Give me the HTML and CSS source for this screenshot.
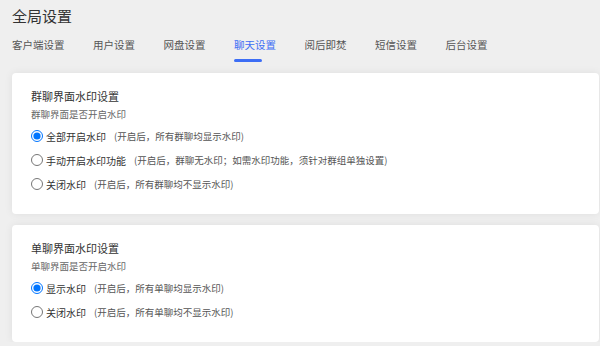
FILE: index.html
```html
<!DOCTYPE html>
<html lang="zh-CN">
<head>
    <meta charset="UTF-8">
    <meta name="viewport" content="width=device-width, initial-scale=1.0">
    <title>全局设置</title>
    <link rel="stylesheet" href="styles.css">
</head>
<body>
    <div class="page">
        <h1>全局设置</h1>

        <div class="tabs">
            <div class="tab">客户端设置</div>
            <div class="tab">用户设置</div>
            <div class="tab">网盘设置</div>
            <div class="tab active">聊天设置</div>
            <div class="tab">阅后即焚</div>
            <div class="tab">短信设置</div>
            <div class="tab">后台设置</div>
        </div>

        <div class="card">
            <h2>群聊界面水印设置</h2>
            <p class="desc">群聊界面是否开启水印</p>
            <label class="option">
                <input type="radio" name="groupMark" checked>
                <span class="name">全部开启水印</span>
                <span class="hint">(开启后，所有群聊均显示水印)</span>
            </label>
            <label class="option">
                <input type="radio" name="groupMark">
                <span class="name">手动开启水印功能</span>
                <span class="hint">(开启后，群聊无水印；如需水印功能，须针对群组单独设置)</span>
            </label>
            <label class="option">
                <input type="radio" name="groupMark">
                <span class="name">关闭水印</span>
                <span class="hint">(开启后，所有群聊均不显示水印)</span>
            </label>
        </div>

        <div class="card">
            <h2>单聊界面水印设置</h2>
            <p class="desc">单聊界面是否开启水印</p>
            <label class="option">
                <input type="radio" name="singleMark" checked>
                <span class="name">显示水印</span>
                <span class="hint">(开启后，所有单聊均显示水印)</span>
            </label>
            <label class="option">
                <input type="radio" name="singleMark">
                <span class="name">关闭水印</span>
                <span class="hint">(开启后，所有单聊均不显示水印)</span>
            </label>
        </div>
    </div>
</body>
</html>
```

FILE: styles.css
```css
body {
    font-family: "Noto Sans CJK SC", "Liberation Sans", sans-serif;
    margin: 0;
    background-color: #efefef;
    color: #333;
}
.page {
    padding: 6px 1px 0 12px;
}
h1 {
    font-size: 15px;
    font-weight: normal;
    line-height: 20px;
    margin: 0;
    color: #333;
}
.tabs {
    display: flex;
    gap: 28.5px;
    margin-top: 12px;
}
.tab {
    font-size: 10.5px;
    line-height: 14px;
    color: #555;
}
.tab::after {
    content: "";
    display: block;
    width: 28px;
    height: 3px;
    margin-top: 7px;
    border-radius: 2px;
}
.tab.active {
    color: #3d6ef5;
}
.tab.active::after {
    background-color: #3d6ef5;
}
.card {
    background-color: #fff;
    border-radius: 4px;
    box-shadow: 0 0 8px rgba(0, 0, 0, 0.07);
    padding: 15px 19px 18px 18.5px;
    margin-top: 11px;
}
.card h2 {
    font-size: 11px;
    font-weight: normal;
    line-height: 16px;
    margin: 0 0 0 0.5px;
    color: #333;
}
.desc {
    font-size: 9.5px;
    line-height: 15px;
    margin: 3px 0 2px 0.5px;
    color: #666;
}
.option {
    display: flex;
    align-items: center;
    height: 24px;
}
.option input {
    width: 12px;
    height: 12px;
    margin: 0 3.5px 0 0;
}
.name {
    font-size: 10px;
    color: #333;
}
.hint {
    font-size: 9.5px;
    color: #555;
    margin-left: 8px;
}
```
